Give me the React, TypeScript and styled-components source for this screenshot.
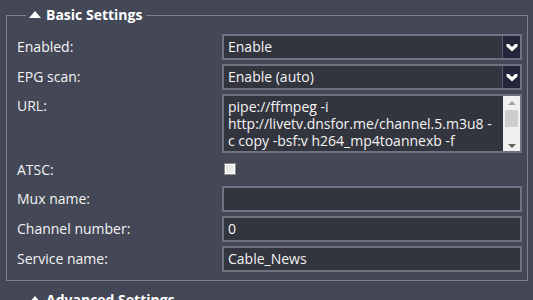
import React from "react";
import styled, { createGlobalStyle } from "styled-components";

const Global = createGlobalStyle`
  html, body { margin: 0; padding: 0; background: #434756; overflow: hidden; }
  body { font-family: "Open Sans", "Liberation Sans", sans-serif; font-size: 14px; color: #f4f4f4; }
`;

const Page = styled.div`
  padding: 6px 6px 0 6px;
  width: 522px;
`;

const Fieldset = styled.fieldset<{ $gap?: number }>`
  margin: ${(p) => p.$gap ?? 0}px 0 0 0;
  padding: 10px 4px 8px 10px;
  border: 1px solid #7c8190;
  min-width: 0;
`;

const Legend = styled.legend`
  padding: 0 4px 0 3px;
  margin-left: 9px;
  font-weight: 700;
  font-size: 14px;
  line-height: 18px;
  color: #ffffff;
  display: flex;
  align-items: center;
  gap: 5px;
`;

const Tri = styled.span`
  width: 0;
  height: 0;
  border-left: 6px solid transparent;
  border-right: 6px solid transparent;
  border-bottom: 7px solid #ffffff;
  margin-top: -2px;
`;

const Grid = styled.div`
  display: grid;
  grid-template-columns: 205px 300px;
  row-gap: 4px;
`;

const Label = styled.div<{ $top?: boolean }>`
  align-self: ${(p) => (p.$top ? "start" : "center")};
  padding-top: ${(p) => (p.$top ? "2px" : "0")};
  line-height: 20px;
`;

const Box = styled.div<{ $h?: number }>`
  box-sizing: border-box;
  height: ${(p) => p.$h ?? 26}px;
  border: 2px solid #6e7282;
  background: #33353e;
  display: flex;
  align-items: stretch;
  overflow: hidden;
`;

const Value = styled.div`
  flex: 1;
  padding: 0 4px;
  line-height: 22px;
  white-space: nowrap;
`;

const ArrowBtn = styled.div`
  width: 17px;
  background: #23253a;
  border-left: 1px solid #5a5e6e;
  display: flex;
  align-items: center;
  justify-content: center;
`;

const TextArea = styled.div`
  flex: 1;
  padding: 2px 4px;
  line-height: 17px;
  font-size: 14px;
`;

const Scroll = styled.div`
  width: 17px;
  background: #f0f0f0;
  display: flex;
  flex-direction: column;
  align-items: center;
  padding: 5px 0 3px;
  box-sizing: border-box;
`;

const Thumb = styled.div`
  width: 13px;
  height: 17px;
  background: #cdcdcd;
  margin: 5px 0 auto;
`;

const SmallTri = styled.span<{ $down?: boolean }>`
  width: 0;
  height: 0;
  border-left: 4px solid transparent;
  border-right: 4px solid transparent;
  ${(p) =>
    p.$down
      ? "border-top: 4px solid #606060;"
      : "border-bottom: 4px solid #a3a3a3;"}
`;

const CheckRow = styled.div`
  height: 25px;
  display: flex;
  align-items: center;
  padding-left: 2px;
`;

const Check = styled.div`
  box-sizing: border-box;
  width: 12px;
  height: 12px;
  border: 1px solid #8a8a8a;
  background: linear-gradient(135deg, #dcdcdc, #f8f8f8);
  box-shadow: inset 0 0 0 1px #ffffff;
  margin-top: -2px;
`;

const Chevron = () => (
  <svg width="12" height="9" viewBox="0 0 12 9">
    <path d="M0.5 1 L3 1 L6 4 L9 1 L11.5 1 L11.5 3.5 L6 8.5 L0.5 3.5 Z" fill="#fff" />
  </svg>
);

const Select = ({ value }: { value: string }) => (
  <Box>
    <Value>{value}</Value>
    <ArrowBtn>
      <Chevron />
    </ArrowBtn>
  </Box>
);

const Input = ({ value = "" }: { value?: string }) => (
  <Box>
    <Value>{value}</Value>
  </Box>
);

export default function App() {
  return (
    <Page>
      <Global />
      <Fieldset>
        <Legend>
          <Tri />
          Basic Settings
        </Legend>
        <Grid>
          <Label>Enabled:</Label>
          <Select value="Enable" />
          <Label>EPG scan:</Label>
          <Select value="Enable (auto)" />
          <Label $top>URL:</Label>
          <Box $h={59}>
            <TextArea>
              pipe://ffmpeg -i
              <br />
              http://livetv.dnsfor.me/channel.5.m3u8 -
              <br />c copy -bsf:v h264_mp4toannexb -f
            </TextArea>
            <Scroll>
              <SmallTri />
              <Thumb />
              <SmallTri $down />
            </Scroll>
          </Box>
          <Label>ATSC:</Label>
          <CheckRow>
            <Check />
          </CheckRow>
          <Label>Mux name:</Label>
          <Input />
          <Label>Channel number:</Label>
          <Input value="0" />
          <Label>Service name:</Label>
          <Input value="Cable_News" />
        </Grid>
      </Fieldset>
      <Fieldset $gap={10}>
        <Legend>
          <Tri />
          Advanced Settings
        </Legend>
      </Fieldset>
    </Page>
  );
}
